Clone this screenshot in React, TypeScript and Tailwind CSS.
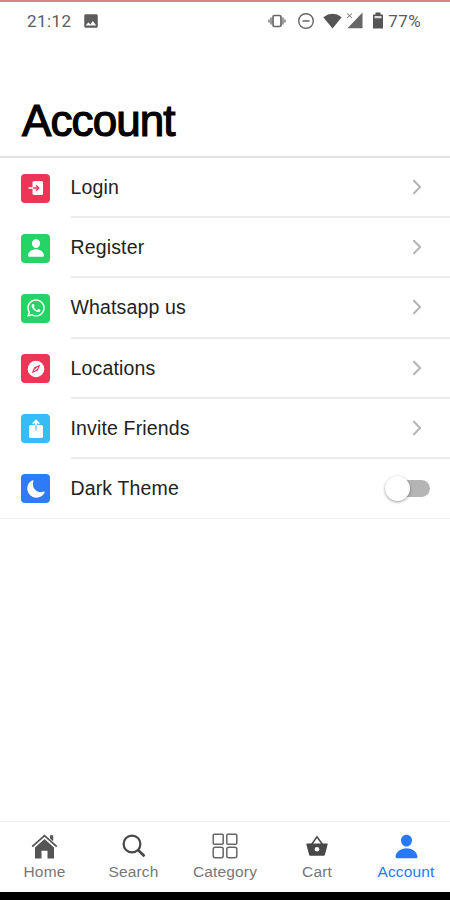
import type { ReactNode } from "react";
import {
  IoChevronForward,
  IoLogoWhatsapp,
  IoMoon,
  IoPerson,
} from "react-icons/io5";
import { MdImage } from "react-icons/md";

interface MenuItem {
  label: string;
  color: string;
  icon: ReactNode;
  toggle?: boolean;
}

interface Tab {
  label: string;
  width: string;
  icon: ReactNode;
  active?: boolean;
}

const LoginIcon = () => (
  <svg width="18" height="18" viewBox="0 0 18 18" fill="none">
    <rect x="5.5" y="2" width="10.5" height="14" rx="1.5" fill="white" />
    <path d="M1.5 9h5" stroke="white" strokeWidth="1.6" />
    <path d="M6 9h5.5M9 6.3 11.8 9 9 11.7" stroke="#ed3558" strokeWidth="1.3" />
  </svg>
);

const CompassIcon = () => (
  <svg width="18" height="18" viewBox="0 0 18 18">
    <circle cx="9" cy="9" r="8.3" fill="white" />
    <path d="M13.3 4.7 10.9 10.6 4.7 13.3 7.2 7.3Z" fill="#ed3558" />
    <path d="m7.3 10.7 3.6-3.4" stroke="white" strokeWidth="1.1" />
  </svg>
);

const ShareIcon = () => (
  <svg width="18" height="20" viewBox="0 0 18 20" fill="none">
    <rect x="2" y="6" width="14" height="13" rx="1.7" fill="white" />
    <path d="M9 6V1.5M5.8 4.8 9 1.6l3.2 3.2" stroke="white" strokeWidth="1.8" />
    <path d="M9 6v5.5" stroke="#36bcf7" strokeWidth="1" />
  </svg>
);

const HomeIcon = () => (
  <svg width="27" height="25" viewBox="0 0 27 25" fill="none">
    <path d="M4 13.5 13.5 5 23 13.5v11h-6.5v-7.8h-6v7.8H4Z" fill="#555" />
    <path d="m1.2 12.7 12.3-11 12.3 11" stroke="#555" strokeWidth="1.8" />
    <path d="M19 1.2h3.2v6L19 4.4Z" fill="#555" />
  </svg>
);

const SearchIcon = () => (
  <svg width="24" height="24" viewBox="0 0 24 24" fill="none" stroke="#484848">
    <circle cx="10" cy="10" r="8.4" strokeWidth="2.2" />
    <path d="m16 16 6.5 6.3" strokeWidth="2.6" />
  </svg>
);

const CategoryIcon = () => (
  <svg
    width="26"
    height="26"
    viewBox="0 0 26 26"
    fill="none"
    stroke="#666"
    strokeWidth="1.5"
  >
    <rect x="1.2" y="1.2" width="10" height="10" rx="1" />
    <rect x="14.8" y="1.2" width="10" height="10" rx="1" />
    <rect x="1.2" y="14.2" width="10" height="10.6" rx="2" />
    <rect x="14.8" y="14.2" width="10" height="10.6" rx="2" />
  </svg>
);

const CartIcon = () => (
  <svg width="22" height="22" viewBox="0 0 22 22" fill="none">
    <path d="M5.5 9.5 11 1.8l5.5 7.7" stroke="#484848" strokeWidth="1.5" />
    <path
      d="M1 8.5h20c.5 0 .8.4.6.9l-2.6 10c-.2.9-.8 1.4-1.6 1.4H4.6c-.8 0-1.4-.5-1.6-1.4L.4 9.4c-.1-.5.1-.9.6-.9Z"
      fill="#484848"
    />
    <circle cx="11" cy="14.3" r="2.3" fill="white" />
  </svg>
);

const items: MenuItem[] = [
  { label: "Login", color: "bg-[#ed3558]", icon: <LoginIcon /> },
  { label: "Register", color: "bg-[#25d366]", icon: <IoPerson size={20} /> },
  {
    label: "Whatsapp us",
    color: "bg-[#25d366]",
    icon: <IoLogoWhatsapp size={20} />,
  },
  { label: "Locations", color: "bg-[#ed3558]", icon: <CompassIcon /> },
  { label: "Invite Friends", color: "bg-[#36bcf7]", icon: <ShareIcon /> },
  {
    label: "Dark Theme",
    color: "bg-[#2f7bf6]",
    icon: <IoMoon size={20} />,
    toggle: true,
  },
];

const tabs: Tab[] = [
  { label: "Home", width: "w-[89px]", icon: <HomeIcon /> },
  { label: "Search", width: "w-[89px]", icon: <SearchIcon /> },
  { label: "Category", width: "w-[94px]", icon: <CategoryIcon /> },
  { label: "Cart", width: "w-[90px]", icon: <CartIcon /> },
  {
    label: "Account",
    width: "w-[88px]",
    icon: <IoPerson size={27} />,
    active: true,
  },
];

const StatusBar = () => (
  <div className="flex h-[38px] shrink-0 items-center border-t-2 border-[#df7f87] pl-[27px] pr-[29px] pt-px font-['Roboto',sans-serif] text-[17px] text-[#5c5c5c]">
    <span className="w-[55px] pt-[2px] tracking-[0.4px]">21:12</span>
    <MdImage size={18} />
    <div className="ml-auto flex items-center">
      <svg width="18" height="16" viewBox="0 0 18 16" fill="none" stroke="#666">
        <rect x="5" y="2.5" width="8" height="11" rx="1.5" strokeWidth="1.7" />
        <path d="M3 4.5v7M15 4.5v7M1 6.5v3M17 6.5v3" strokeWidth="1.3" />
      </svg>
      <svg
        className="ml-[11px]"
        width="18"
        height="18"
        viewBox="0 0 18 18"
        fill="none"
        stroke="#666"
      >
        <circle cx="9" cy="9" r="7.3" strokeWidth="1.4" />
        <path d="M5.5 9h7" strokeWidth="1.5" />
      </svg>
      <svg className="ml-2" width="19" height="16" viewBox="0 0 19 16">
        <path d="M.3 4.2Q9.5-2.6 18.7 4.2L9.5 15.5Z" fill="#555" />
      </svg>
      <svg className="ml-[4px]" width="17" height="17" viewBox="0 0 17 17">
        <path d="M16.5.5v15.7H1.5Z" fill="#666" />
        <path d="m1 1.5 5 4.5M6 1.5 1 6" stroke="#777" strokeWidth="1" />
      </svg>
      <svg
        className="ml-[9px]"
        width="12"
        height="17"
        viewBox="0 0 12 17"
        fill="none"
      >
        <path d="M3.5.5h5v2H11v14H1v-14h2.5Z" fill="#555" />
        <path d="M2.5 4h7v2.3h-7Z" fill="#ddd" />
      </svg>
      <span className="ml-[4px] pt-[2px] tracking-[0.4px]">77%</span>
    </div>
  </div>
);

const Toggle = () => (
  <div className="relative mr-[20px] h-[17px] w-[39px] rounded-full bg-[#b5b5b5]">
    <div className="absolute -left-[6px] -top-[4px] h-[25px] w-[25px] rounded-full bg-white shadow-[0_1px_3px_rgba(0,0,0,0.4)]" />
  </div>
);

const MenuRow = ({ item, last }: { item: MenuItem; last: boolean }) => (
  <li
    className={`flex h-[60.2px] items-stretch pl-[21px] ${last ? "border-b border-[#f0f0f0]" : ""}`}
  >
    <div className="flex w-[50px] items-center">
      <span
        className={`flex h-[29px] w-[29px] items-center justify-center rounded-[4px] text-white ${item.color}`}
      >
        {item.icon}
      </span>
    </div>
    <div
      className={`flex flex-1 items-center justify-between ${last ? "" : "border-b-2 border-[#ebebeb]"}`}
    >
      <span className="-ml-[0.5px] pt-px text-[19.5px] tracking-[0.15px] text-[#222]">
        {item.label}
      </span>
      {item.toggle ? (
        <Toggle />
      ) : (
        <IoChevronForward className="mr-[22px] text-[#b5b5b5]" size={22} />
      )}
    </div>
  </li>
);

const TabBar = () => (
  <nav className="flex h-[71px] shrink-0 border-t border-[#eee]">
    {tabs.map(({ label, width, icon, active }) => (
      <div
        key={label}
        className={`flex shrink-0 flex-col items-center pt-[10px] ${width} ${active ? "text-[#2879f7]" : "text-[#777]"}`}
      >
        <div className="flex h-[28px] items-center">{icon}</div>
        <span className="mt-[3px] text-[15.5px] leading-[18px] tracking-[0.15px]">
          {label}
        </span>
      </div>
    ))}
  </nav>
);

export default function App() {
  return (
    <div className="flex h-[900px] w-[450px] flex-col bg-white font-['Liberation_Sans',Arial,sans-serif]">
      <StatusBar />
      <header className="flex h-[120px] shrink-0 items-end border-b-2 border-[#e2e2e2] pb-[10px] pl-[22px]">
        <h1 className="text-[44px] leading-[50px] tracking-[-0.9px] text-black [-webkit-text-stroke:1.2px_black]">
          Account
        </h1>
      </header>
      <ul>
        {items.map((item, i) => (
          <MenuRow key={item.label} item={item} last={i === items.length - 1} />
        ))}
      </ul>
      <div className="flex-1" />
      <TabBar />
      <div className="h-[8px] shrink-0 bg-black" />
    </div>
  );
}
